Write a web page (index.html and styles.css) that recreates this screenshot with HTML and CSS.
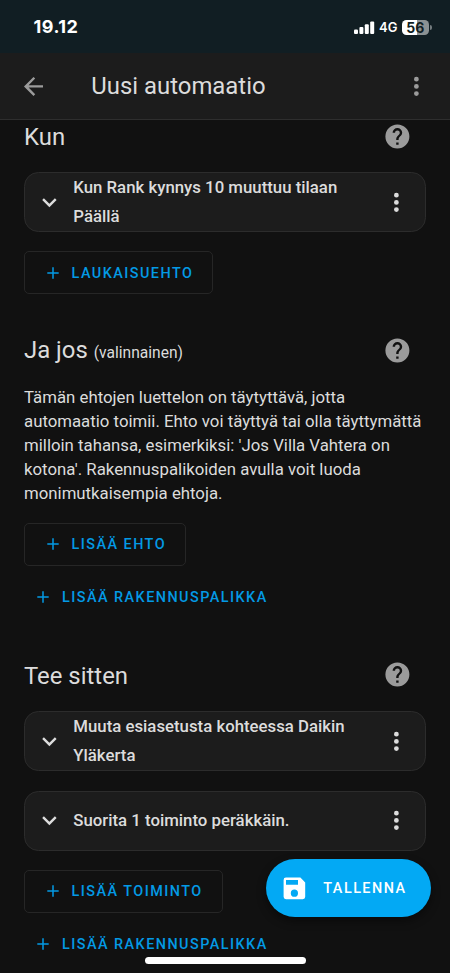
FILE: index.html
```html
<!DOCTYPE html>
<html lang="fi">
<head>
<meta charset="utf-8">
<meta name="viewport" content="width=device-width, initial-scale=1">
<title>Uusi automaatio</title>
<link rel="stylesheet" href="styles.css">
</head>
<body>
<svg class="defs" aria-hidden="true">
  <symbol id="dots" viewBox="0 0 24 24"><path d="M12 16a2 2 0 1 1 0 4 2 2 0 0 1 0-4m0-6a2 2 0 1 1 0 4 2 2 0 0 1 0-4m0-6a2 2 0 1 1 0 4 2 2 0 0 1 0-4"/></symbol>
  <symbol id="help" viewBox="0 0 24 24"><path d="M15.07 11.25l-.9.92C13.45 12.89 13 13.5 13 15h-2v-.5c0-1.11.45-2.11 1.17-2.83l1.24-1.26c.37-.36.59-.86.59-1.41a2 2 0 0 0-2-2 2 2 0 0 0-2 2H8a4 4 0 0 1 4-4 4 4 0 0 1 4 4c0 .88-.36 1.67-.93 2.25M13 19h-2v-2h2M12 2A10 10 0 0 0 2 12a10 10 0 0 0 10 10 10 10 0 0 0 10-10A10 10 0 0 0 12 2z"/></symbol>
  <symbol id="chevron" viewBox="0 0 24 24"><path d="M7.41 8.58L12 13.17l4.59-4.59L18 10l-6 6-6-6 1.41-1.42z"/></symbol>
  <symbol id="plus" viewBox="0 0 24 24"><path d="M19.6 13h-6.6v6.6h-2v-6.6H4.4v-2h6.6V4.4h2v6.6h6.6v2z"/></symbol>
  <symbol id="back" viewBox="0 0 24 24"><path d="M20 11v2H8l5.5 5.5-1.42 1.42L4.16 12l7.92-7.92L13.5 5.5 8 11h12z"/></symbol>
  <symbol id="save" viewBox="0 0 24 24"><path d="M15 9H5V5h10m-3 14a3 3 0 0 1-3-3 3 3 0 0 1 3-3 3 3 0 0 1 3 3 3 3 0 0 1-3 3m5-16H5a2 2 0 0 0-2 2v14a2 2 0 0 0 2 2h14a2 2 0 0 0 2-2V7l-4-4z"/></symbol>
</svg>
<div class="screen">
  <div class="status">
    <span class="time">19.12</span>
    <div class="indicators">
      <svg class="signal" viewBox="0 0 21 13"><rect x="0" y="8.5" width="4" height="4.5" rx="1.1"/><rect x="5.4" y="6" width="4" height="7" rx="1.1"/><rect x="10.8" y="3.2" width="4" height="9.8" rx="1.1"/><rect x="16.2" y="0.4" width="4" height="12.6" rx="1.1"/></svg>
      <span class="network">4G</span>
      <span class="battery">56</span>
      <span class="battery-tip"></span>
    </div>
  </div>
  <header class="toolbar">
    <svg class="icon"><use href="#back"/></svg>
    <h1>Uusi automaatio</h1>
    <svg class="icon"><use href="#dots"/></svg>
  </header>
  <main>
    <section class="triggers">
      <div class="heading"><h2>Kun</h2><svg class="icon help"><use href="#help"/></svg></div>
      <div class="card">
        <svg class="icon"><use href="#chevron"/></svg>
        <p>Kun Rank kynnys 10 muuttuu tilaan Päällä</p>
        <svg class="icon"><use href="#dots"/></svg>
      </div>
      <button class="outlined w-trigger"><svg><use href="#plus"/></svg><span>LAUKAISUEHTO</span></button>
    </section>
    <section class="conditions">
      <div class="heading"><h2>Ja jos <small>(valinnainen)</small></h2><svg class="icon help"><use href="#help"/></svg></div>
      <p class="description">Tämän ehtojen luettelon on täytyttävä, jotta<br>automaatio toimii. Ehto voi täyttyä tai olla täyttymättä<br>milloin tahansa, esimerkiksi: 'Jos Villa Vahtera on<br>kotona'. Rakennuspalikoiden avulla voit luoda<br>monimutkaisempia ehtoja.</p>
      <button class="outlined w-condition"><svg><use href="#plus"/></svg><span>LISÄÄ EHTO</span></button>
      <button class="text"><svg><use href="#plus"/></svg><span>LISÄÄ RAKENNUSPALIKKA</span></button>
    </section>
    <section class="actions">
      <div class="heading"><h2>Tee sitten</h2><svg class="icon help"><use href="#help"/></svg></div>
      <div class="card">
        <svg class="icon"><use href="#chevron"/></svg>
        <p>Muuta esiasetusta kohteessa Daikin Yläkerta</p>
        <svg class="icon"><use href="#dots"/></svg>
      </div>
      <div class="card">
        <svg class="icon"><use href="#chevron"/></svg>
        <p>Suorita 1 toiminto peräkkäin.</p>
        <svg class="icon"><use href="#dots"/></svg>
      </div>
      <button class="outlined w-action"><svg><use href="#plus"/></svg><span>LISÄÄ TOIMINTO</span></button>
      <button class="text"><svg><use href="#plus"/></svg><span>LISÄÄ RAKENNUSPALIKKA</span></button>
    </section>
  </main>
  <button class="fab"><svg class="icon"><use href="#save"/></svg>TALLENNA</button>
  <div class="home-bar"></div>
</div>
</body>
</html>
```

FILE: styles.css
```css
* { box-sizing: border-box; }
body { margin: 0; background: #111; color: #dcdcdc; font-family: Roboto, sans-serif; }
h1, h2, p { margin: 0; font-weight: 400; }
svg { display: block; fill: currentColor; flex: none; }
button { margin: 0; font-family: inherit; }
.defs { position: absolute; width: 0; height: 0; }
.screen { position: relative; width: 450px; height: 973px; overflow: hidden; display: flex; flex-direction: column; }
.icon { width: 28.8px; height: 28.8px; }

.status { flex: none; height: 53px; padding: 1px 18.5px 0 33.5px; background: #111e23; color: #fff; display: flex; align-items: center; justify-content: space-between; }
.time { font: 700 18px/20px Inter, sans-serif; letter-spacing: 0.5px; }
.indicators { display: flex; align-items: center; }
.signal { width: 21px; height: 13px; margin-right: 4px; }
.network { width: 23px; font: 600 13px/16px Inter, sans-serif; }
.battery { width: 26.5px; height: 15px; border-radius: 4.5px; background: linear-gradient(90deg, #fff 56%, #8b9193 56%); color: #111e23; font: 700 14px/15px Inter, sans-serif; text-align: center; }
.battery-tip { width: 2px; height: 5px; margin-left: 1px; border-radius: 0 2px 2px 0; background: #737b7e; }

.toolbar { flex: none; height: 67px; padding: 0 19px; background: #1c1c1c; border-bottom: 1.2px solid #2e2e2e; display: flex; align-items: center; color: #9b9b9b; }
.toolbar h1 { flex: 1; margin-left: 43.5px; font-size: 23.9px; line-height: 30px; color: #dcdcdc; }

main { flex: none; padding: 0 24px; }
section { display: flex; flex-direction: column; align-items: flex-start; }
.heading { width: 100%; height: 32px; padding-right: 14.6px; display: flex; align-items: center; justify-content: space-between; }
h2 { padding-top: 2px; font-size: 23.9px; line-height: 32px; }
small { font-size: 15.6px; }
.help { color: #9b9b9b; }
.conditions { margin-top: 40px; }
.conditions h2 { padding-top: 3px; }
.actions { margin-top: 40px; }
.actions h2 { padding-top: 3px; }

.card { width: 402px; height: 60px; margin-top: 19.6px; padding: 0 14px 0 10px; display: flex; align-items: center; background: #1c1c1c; border: 1.2px solid #2c2c2c; border-radius: 14.4px; }
.card p { flex: 1; margin-left: 9.5px; padding-right: 25px; font-size: 16.8px; line-height: 28.8px; font-weight: 500; }
.triggers .card { margin-top: 20.4px; }
.triggers .card p { padding-bottom: 1.6px; }
.actions .heading + .card { margin-top: 20.8px; }

.outlined, .text { display: flex; align-items: center; background: none; color: #039ae5; font-size: 14.4px; font-weight: 500; letter-spacing: 1.47px; line-height: 20px; white-space: nowrap; }
.outlined span, .text span { padding-top: 2px; }
.outlined { height: 43px; margin-top: 19px; padding: 0 0 0 18.5px; border: 1px solid #262626; border-radius: 5px; }
.outlined svg, .text svg { width: 18px; height: 18px; margin-right: 10px; }
.w-trigger { width: 189px; }
.w-condition { width: 161.5px; }
.w-action { width: 199px; }
.text { height: 43px; margin-top: 9.6px; padding: 0 10px; border: 0; }

.description { margin-top: 18.8px; font-size: 16.8px; line-height: 24px; white-space: nowrap; }
.description + .outlined { margin-top: 17.6px; }

.fab { position: absolute; left: 266px; top: 859px; width: 165px; height: 58px; padding: 0 0 0 14px; display: flex; align-items: center; border: 0; border-radius: 29px; background: #03a9f4; color: #fff; font-size: 14.4px; font-weight: 500; letter-spacing: 1.47px; box-shadow: 0 4px 10px rgba(0, 0, 0, .45); }
.fab svg { margin-right: 14.5px; }
.home-bar { position: absolute; left: 145px; top: 957px; width: 161px; height: 6.5px; border-radius: 4px; background: #fff; }
```
